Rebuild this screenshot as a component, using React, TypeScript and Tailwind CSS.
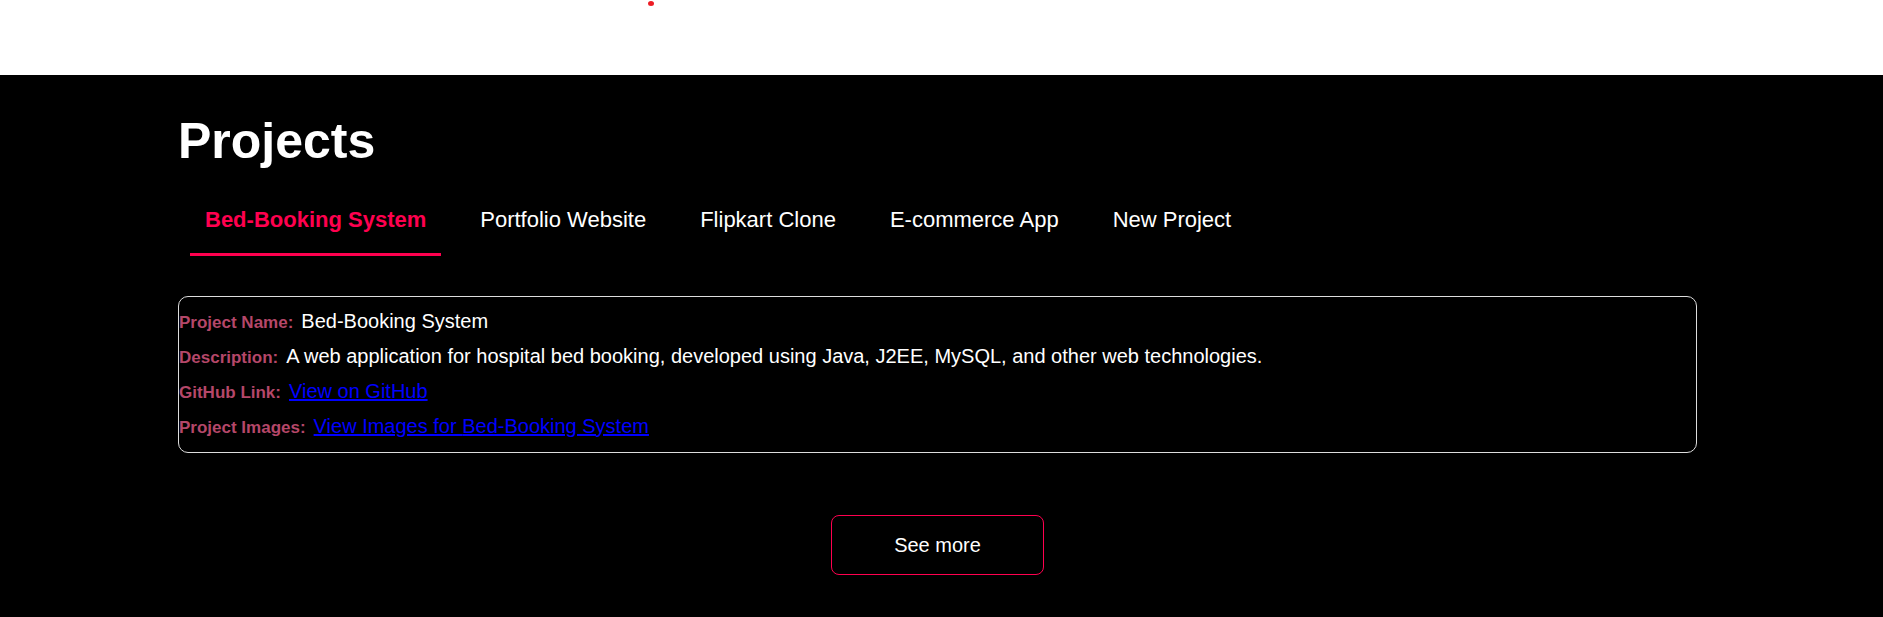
import { useState } from "react";

type Project = {
  name: string;
  description: string;
};

const projects: Project[] = [
  {
    name: "Bed-Booking System",
    description:
      "A web application for hospital bed booking, developed using Java, J2EE, MySQL, and other web technologies.",
  },
  { name: "Portfolio Website", description: "A personal portfolio website." },
  { name: "Flipkart Clone", description: "A clone of the Flipkart storefront." },
  { name: "E-commerce App", description: "An online shopping application." },
  { name: "New Project", description: "A project in progress." },
];

const labelClass = "text-[17px] font-bold leading-none text-[#b54769]";
const linkClass = "text-[#0000ff] underline";

export default function App() {
  const [active, setActive] = useState(0);
  const project = projects[active];

  return (
    <div className="flex min-h-screen flex-col bg-white font-['Liberation_Sans',Arial,sans-serif] text-xl text-white">
      <div className="h-[75px] pl-[648px] pt-px">
        <svg width="6" height="5" viewBox="0 0 6 5" aria-hidden="true">
          <ellipse cx="3" cy="2.5" rx="3" ry="2.5" fill="#ed1c24" />
        </svg>
      </div>

      <section className="flex grow flex-col bg-black pb-10 pl-[178px] pr-[186px] pt-9">
        <h1 className="text-[50px] font-bold leading-[60px]">Projects</h1>

        <div role="tablist" className="mt-[34px] flex flex-wrap gap-6 pl-3">
          {projects.map((item, index) => (
            <button
              key={item.name}
              type="button"
              role="tab"
              aria-selected={index === active}
              onClick={() => setActive(index)}
              className={
                index === active
                  ? "cursor-pointer border-b-[3px] border-[#ff004f] px-[15px] pb-[18px] text-[22px] font-bold leading-[30px] text-[#ff004f]"
                  : "cursor-pointer border-b-[3px] border-transparent px-[15px] pb-[18px] text-[22px] leading-[30px]"
              }
            >
              {item.name}
            </button>
          ))}
        </div>

        <div
          role="tabpanel"
          className="mt-10 rounded-[10px] border border-[#dddddd] pb-2 pt-[7px] leading-[35px]"
        >
          <p className="flex items-baseline gap-2">
            <strong className={labelClass}>Project Name:</strong>
            <span>{project.name}</span>
          </p>
          <p className="flex items-baseline gap-2">
            <strong className={labelClass}>Description:</strong>
            <span>{project.description}</span>
          </p>
          <p className="flex items-baseline gap-2">
            <strong className={labelClass}>GitHub Link:</strong>
            <a href="#github" className={linkClass}>
              View on GitHub
            </a>
          </p>
          <p className="flex items-baseline gap-2">
            <strong className={labelClass}>Project Images:</strong>
            <a href="#images" className={linkClass}>
              View Images for {project.name}
            </a>
          </p>
        </div>

        <a
          href="#more"
          className="mt-[62px] self-center rounded-lg border border-[#ff004f] px-[62px] py-[15px] leading-7"
        >
          See more
        </a>
      </section>
    </div>
  );
}
